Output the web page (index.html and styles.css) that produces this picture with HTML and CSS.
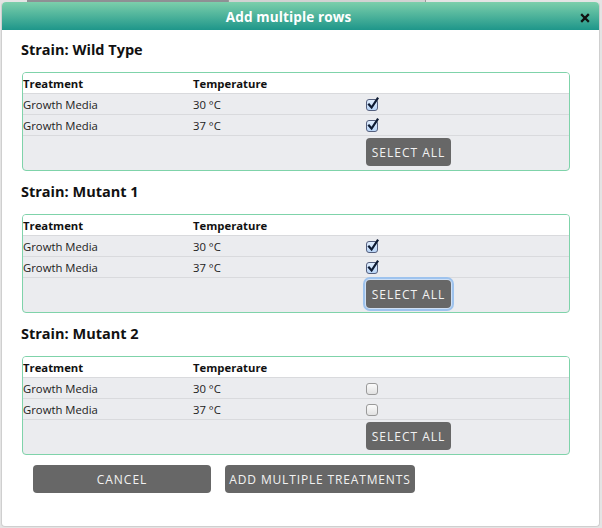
FILE: index.html
```html
<!DOCTYPE html>
<html>
<head>
<meta charset="utf-8">
<link rel="stylesheet" href="styles.css">
</head>
<body>
<div class="backdrop"><span class="bar"></span><span class="bar2"></span></div>
<div class="dialog">
  <div class="titlebar">
    <span class="title">Add multiple rows</span>
    <svg class="close" viewBox="0 0 8 8"><path d="M1 1 L7 7 M7 1 L1 7" /></svg>
  </div>
  <div class="content">
    <section class="strain">
      <h2>Strain: Wild Type</h2>
      <div class="box">
        <div class="row head"><span class="c1">Treatment</span><span class="c2">Temperature</span><span class="c3"></span></div>
        <div class="row"><span class="c1">Growth Media</span><span class="c2">30 °C</span><span class="c3"><span class="cb on"><svg viewBox="0 0 14 14"><path d="M3 7.5 L5.6 10.5 L11.5 1.5" /></svg></span></span></div>
        <div class="row"><span class="c1">Growth Media</span><span class="c2">37 °C</span><span class="c3"><span class="cb on"><svg viewBox="0 0 14 14"><path d="M3 7.5 L5.6 10.5 L11.5 1.5" /></svg></span></span></div>
        <div class="row foot"><span class="c1"></span><span class="c2"></span><span class="c3"><button class="btn sel">SELECT ALL</button></span></div>
      </div>
    </section>
    <section class="strain">
      <h2>Strain: Mutant 1</h2>
      <div class="box">
        <div class="row head"><span class="c1">Treatment</span><span class="c2">Temperature</span><span class="c3"></span></div>
        <div class="row"><span class="c1">Growth Media</span><span class="c2">30 °C</span><span class="c3"><span class="cb on"><svg viewBox="0 0 14 14"><path d="M3 7.5 L5.6 10.5 L11.5 1.5" /></svg></span></span></div>
        <div class="row"><span class="c1">Growth Media</span><span class="c2">37 °C</span><span class="c3"><span class="cb on"><svg viewBox="0 0 14 14"><path d="M3 7.5 L5.6 10.5 L11.5 1.5" /></svg></span></span></div>
        <div class="row foot"><span class="c1"></span><span class="c2"></span><span class="c3"><button class="btn sel focus">SELECT ALL</button></span></div>
      </div>
    </section>
    <section class="strain">
      <h2>Strain: Mutant 2</h2>
      <div class="box">
        <div class="row head"><span class="c1">Treatment</span><span class="c2">Temperature</span><span class="c3"></span></div>
        <div class="row"><span class="c1">Growth Media</span><span class="c2">30 °C</span><span class="c3"><span class="cb"></span></span></div>
        <div class="row"><span class="c1">Growth Media</span><span class="c2">37 °C</span><span class="c3"><span class="cb"></span></span></div>
        <div class="row foot"><span class="c1"></span><span class="c2"></span><span class="c3"><button class="btn sel">SELECT ALL</button></span></div>
      </div>
    </section>
    <div class="actions">
      <button class="btn cancel">CANCEL</button>
      <button class="btn add">ADD MULTIPLE TREATMENTS</button>
    </div>
  </div>
</div>
</body>
</html>
```
FILE: styles.css
```css
* { box-sizing: border-box; }
html, body { margin: 0; padding: 0; }
body {
  width: 602px;
  height: 528px;
  background: #e4e4e4;
  font-family: "Open Sans", "Noto Sans", sans-serif;
  overflow: hidden;
}
.backdrop {
  height: 2px;
  display: flex;
  padding-left: 27px;
}
.backdrop .bar {
  width: 201px;
  height: 2px;
  background: #8e9094;
}
.backdrop .bar2 {
  width: 198px;
  height: 2px;
  background: #d2d2d2;
  border-left: 1px solid #9a9a9a;
  border-right: 1px solid #9a9a9a;
}
.dialog {
  margin-left: 1px;
  width: 599px;
  height: 525px;
  background: #fff;
  border: 1px solid #cfcfcf;
  border-top: none;
  border-radius: 4px;
}
.titlebar {
  height: 28px;
  border-radius: 4px 4px 0 0;
  background: linear-gradient(#7ccfab, #1e968a);
  display: flex;
  align-items: center;
  justify-content: center;
  padding-right: 24px;
  position: relative;
}
.title {
  color: #fff;
  font-weight: 700;
  font-size: 13.6px;
  letter-spacing: 0.1px;
}
.close {
  position: absolute;
  right: 10px;
  top: 12px;
  width: 8px;
  height: 8px;
  overflow: visible;
}
.close path {
  stroke: #111;
  stroke-width: 2.3;
  stroke-linecap: square;
  fill: none;
}
.content {
  padding: 10px 0 0 19px;
}
.strain h2 {
  margin: 0 0 12px 0;
  font-size: 14.5px;
  line-height: 20px;
  font-weight: 700;
  color: #111;
}
.strain {
  margin-bottom: 11px;
}
.box {
  margin-left: 1px;
  width: 548px;
  border: 1px solid #7fd3aa;
  border-radius: 4px;
  overflow: hidden;
  background: #ebecef;
}
.row {
  display: flex;
  height: 21px;
  border-top: 1px solid #d9dadd;
  align-items: center;
  font-size: 11.3px;
  color: #222;
}
.row.head {
  height: 20px;
  border-top: none;
  background: #fff;
  font-weight: 700;
  color: #111;
}
.row.foot {
  height: 35px;
  align-items: flex-start;
}
.c1 { width: 170px; white-space: nowrap; }
.c2 { width: 173px; white-space: nowrap; }
.c3 { flex: 1; display: flex; align-items: center; }
.cb {
  display: inline-block;
  width: 12px;
  height: 12px;
  border: 1px solid #9a9a9a;
  border-radius: 3px;
  background: linear-gradient(#fbfbfb, #e2e2e2);
  position: relative;
  margin-top: 2px;
}
.cb.on {
  border-color: #55607e;
  background: linear-gradient(#e0edfd, #b9d5f7);
}
.cb svg {
  position: absolute;
  left: -1px;
  top: -3px;
  width: 14px;
  height: 14px;
  overflow: visible;
}
.cb svg path {
  fill: none;
  stroke: #0e1b33;
  stroke-width: 2.2;
  stroke-linecap: square;
}
.btn {
  font-family: "Open Sans", "Noto Sans", sans-serif;
  background: #676767;
  color: #f2f2f2;
  border: none;
  border-radius: 4px;
  font-size: 12px;
  letter-spacing: 1px;
  height: 28px;
  padding: 0;
  cursor: pointer;
}
.btn.sel {
  width: 85px;
  margin-top: 2px;
}
.btn.focus {
  outline: 2px solid #9ec3ee;
  outline-offset: 1px;
  box-shadow: 0 0 0 1px #cfe0f5;
}
.actions {
  display: flex;
  gap: 14px;
  padding-left: 12px;
  margin-top: -1px;
}
.btn.cancel { width: 178px; }
.btn.add { width: 190px; letter-spacing: 0.85px; }
```
